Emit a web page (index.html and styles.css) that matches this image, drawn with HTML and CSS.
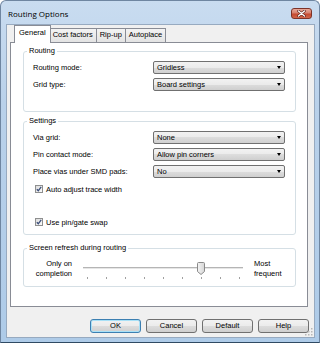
FILE: index.html
```html
<!DOCTYPE html>
<html>
<head>
    <meta charset="UTF-8">
    <title>Routing Options</title>
    <link rel="stylesheet" href="styles.css">
</head>
<body>
    <div class="window">
        <div class="titlebar">
            <span class="title">Routing Options</span>
            <span class="close">
                <svg width="9" height="7" viewBox="0 0 9 7">
                    <path d="M1.5 1 L7.5 6 M7.5 1 L1.5 6" stroke="#5a2018" stroke-width="2.6" stroke-linecap="round"/>
                    <path d="M1.5 1 L7.5 6 M7.5 1 L1.5 6" stroke="#fff" stroke-width="1.4" stroke-linecap="round"/>
                </svg>
            </span>
        </div>
        <div class="client">
            <div class="tabs">
                <span class="tab selected">General</span>
                <span class="tab">Cost factors</span>
                <span class="tab">Rip-up</span>
                <span class="tab">Autoplace</span>
            </div>
            <div class="page">
                <fieldset class="group routing">
                    <legend>Routing</legend>
                    <div class="row"><span class="label">Routing mode:</span><div class="combo">Gridless</div></div>
                    <div class="row"><span class="label">Grid type:</span><div class="combo">Board settings</div></div>
                </fieldset>

                <fieldset class="group settings">
                    <legend>Settings</legend>
                    <div class="row"><span class="label">Via grid:</span><div class="combo">None</div></div>
                    <div class="row"><span class="label">Pin contact mode:</span><div class="combo">Allow pin corners</div></div>
                    <div class="row"><span class="label">Place vias under SMD pads:</span><div class="combo">No</div></div>
                    <div class="check first">
                        <span class="box"><svg width="6" height="6" viewBox="0 0 6 6"><path d="M0.8 3.2 L2.3 4.8 L5.2 0.8" fill="none" stroke="#3c4f7a" stroke-width="1.3"/></svg></span>
                        <span>Auto adjust trace width</span>
                    </div>
                    <div class="check second">
                        <span class="box"><svg width="6" height="6" viewBox="0 0 6 6"><path d="M0.8 3.2 L2.3 4.8 L5.2 0.8" fill="none" stroke="#3c4f7a" stroke-width="1.3"/></svg></span>
                        <span>Use pin/gate swap</span>
                    </div>
                </fieldset>

                <fieldset class="group refresh">
                    <legend>Screen refresh during routing</legend>
                    <div class="slider-row">
                        <span class="end-label left">Only on<br>completion</span>
                        <div class="slider">
                            <div class="track"></div>
                            <div class="thumb">
                                <svg width="8" height="13" viewBox="0 0 8 13">
                                    <defs>
                                        <linearGradient id="tg" x1="0" y1="0" x2="1" y2="0">
                                            <stop offset="0" stop-color="#f4f4f4"/>
                                            <stop offset="1" stop-color="#d6d6d6"/>
                                        </linearGradient>
                                    </defs>
                                    <path d="M0.5 1.5 Q0.5 0.5 1.5 0.5 L6.5 0.5 Q7.5 0.5 7.5 1.5 L7.5 9.5 L4 12.5 L0.5 9.5 Z" fill="url(#tg)" stroke="#8a8a8a"/>
                                </svg>
                            </div>
                            <div class="ticks">
                                <i></i><i></i><i></i><i></i><i></i><i></i><i></i><i></i><i></i>
                            </div>
                        </div>
                        <span class="end-label right">Most<br>frequent</span>
                    </div>
                </fieldset>
            </div>
            <div class="buttons">
                <span class="btn default-btn">OK</span>
                <span class="btn">Cancel</span>
                <span class="btn">Default</span>
                <span class="btn">Help</span>
            </div>
            <svg class="grip" width="8" height="8" viewBox="0 0 8 8">
                <rect x="6" y="0" width="1.5" height="1.5" fill="#b8b8b8"/>
                <rect x="3" y="3" width="1.5" height="1.5" fill="#b8b8b8"/>
                <rect x="6" y="3" width="1.5" height="1.5" fill="#b8b8b8"/>
                <rect x="0" y="6" width="1.5" height="1.5" fill="#b8b8b8"/>
                <rect x="3" y="6" width="1.5" height="1.5" fill="#b8b8b8"/>
                <rect x="6" y="6" width="1.5" height="1.5" fill="#b8b8b8"/>
            </svg>
        </div>
    </div>
</body>
</html>
```

FILE: styles.css
```css
body {
    margin: 0;
    font-family: "Liberation Sans", Arial, sans-serif;
    font-size: 7.5px;
    color: #000;
}
.window {
    width: 320px;
    height: 343px;
    box-sizing: border-box;
    border: 1px solid #6f86a1;
    border-bottom-color: #2f4a63;
    border-radius: 6px 6px 0 0;
    background: linear-gradient(to bottom, #c9dcf0 0%, #b9d1ea 30%, #aecbe8 100%);
    padding: 0 5px 4px 6px;
    display: flex;
    flex-direction: column;
}
.titlebar {
    height: 23px;
    margin: 0 -5px 0 -6px;
    padding: 2px 7px 0 7px;
    box-sizing: border-box;
    display: flex;
    align-items: center;
    justify-content: space-between;
}
.title {
    font-family: "Open Sans", sans-serif;
    font-size: 8px;
    color: #000;
}
.close {
    width: 21px;
    height: 11px;
    box-sizing: border-box;
    border: 1px solid #7d3328;
    border-radius: 3px;
    background: linear-gradient(to bottom, #e9a99a 0%, #d7806d 45%, #c6492f 55%, #d0654a 100%);
    display: flex;
    align-items: center;
    justify-content: center;
}
.client {
    flex: 1;
    position: relative;
    background-color: #f0f0f0;
    border: 1px solid #97aac0;
    margin: 0 -1px 0 -1px;
    padding: 0 6px 0 3px;
    display: flex;
    flex-direction: column;
}
.tabs {
    height: 17px;
    padding-left: 4px;
    display: flex;
    align-items: flex-end;
}
.tab {
    height: 14px;
    box-sizing: border-box;
    padding: 0 3px;
    line-height: 12px;
    border: 1px solid #898c95;
    border-bottom: none;
    background: linear-gradient(to bottom, #f3f3f3, #e3e3e3);
    margin-left: -1px;
    white-space: nowrap;
}
.tab.selected {
    height: 18px;
    margin: 0 -1px -1px 0;
    padding: 0 4px;
    line-height: 14px;
    background: #fff;
    position: relative;
    z-index: 1;
}
.page {
    height: 265px;
    box-sizing: border-box;
    background: #fff;
    border: 1px solid #898c95;
    padding: 3px 11px 0 12px;
}
.group {
    margin: 0;
    border: 1px solid #d5dfe5;
    border-radius: 3px;
    padding: 5px 10px 20px 9px;
}
.group legend {
    padding: 0 2px;
    margin-left: -6px;
    line-height: 10px;
}
.group.settings {
    margin-top: 4px;
    padding-bottom: 7px;
}
.group.refresh {
    margin-top: 8px;
    padding-top: 6px;
    padding-bottom: 8px;
}
.row {
    display: flex;
    align-items: center;
    height: 13px;
}
.row + .row {
    margin-top: 4px;
}
.label {
    flex: 1;
}
.combo {
    width: 132px;
    height: 13px;
    box-sizing: border-box;
    border: 1px solid #707070;
    border-radius: 2px;
    background: linear-gradient(to bottom, #f2f2f2 0%, #ebebeb 50%, #dddddd 50%, #cfcfcf 100%);
    padding-left: 3px;
    line-height: 11px;
    position: relative;
}
.combo::after {
    content: "";
    position: absolute;
    right: 3px;
    top: 4px;
    border-left: 2.5px solid transparent;
    border-right: 2.5px solid transparent;
    border-top: 3px solid #000;
}
.check {
    display: flex;
    align-items: center;
    height: 10px;
    margin-left: 2px;
    gap: 3px;
}
.check.first {
    margin-top: 6px;
}
.check.second {
    margin-top: 23px;
}
.box {
    width: 8px;
    height: 8px;
    box-sizing: border-box;
    border: 1px solid #8e8f8f;
    background: linear-gradient(to bottom right, #dcdcdc, #fbfbfb);
    display: flex;
    align-items: center;
    justify-content: center;
}
.slider-row {
    display: flex;
    align-items: flex-start;
    height: 19px;
}
.end-label {
    line-height: 9.5px;
}
.end-label.left {
    width: 39px;
    text-align: right;
}
.end-label.right {
    margin-left: 11px;
}
.slider {
    position: relative;
    width: 160px;
    height: 19px;
    margin-left: 11px;
}
.track {
    margin-top: 8px;
    height: 1px;
    background: #b5b5b5;
    border-bottom: 1px solid #e6e6e6;
}
.thumb {
    position: absolute;
    left: 114px;
    top: 3px;
    height: 13px;
}
.ticks {
    margin-top: 8px;
    padding: 0 3px 0 4px;
    display: flex;
    justify-content: space-between;
}
.ticks i {
    width: 1px;
    height: 2px;
    background: #a0a0a0;
}
.buttons {
    margin-top: 12px;
    margin-right: -1px;
    display: flex;
    justify-content: flex-end;
    gap: 5px;
}
.btn {
    width: 51px;
    height: 14px;
    box-sizing: border-box;
    border: 1px solid #707070;
    border-radius: 3px;
    background: linear-gradient(to bottom, #f2f2f2 0%, #ebebeb 50%, #dddddd 50%, #cfcfcf 100%);
    text-align: center;
    line-height: 12px;
}
.btn.default-btn {
    border-color: #3c7fb1;
    box-shadow: inset 0 0 0 1px #a9e1f7;
}
.grip {
    position: absolute;
    right: 1px;
    bottom: 1px;
}
```
